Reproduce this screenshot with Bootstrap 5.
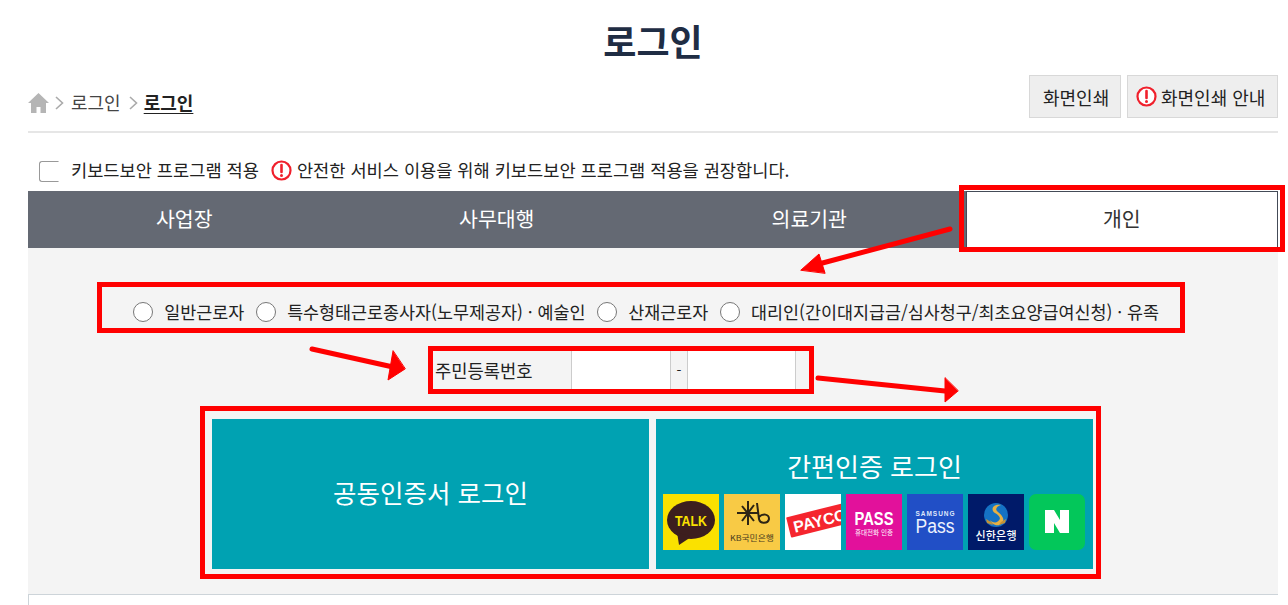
<!DOCTYPE html>
<html lang="ko">
<head>
<meta charset="utf-8">
<title>로그인</title>
<link href="https://cdn.jsdelivr.net/npm/bootstrap@5.3.0/dist/css/bootstrap.min.css" rel="stylesheet">
<style>
html,body{height:605px;overflow:hidden;background:#fff}
body{font-family:"Noto Sans CJK KR","Noto Sans",sans-serif;color:#222;font-size:17.6px;position:relative}
.page-wrap{padding:0 10px 0 28px}
.page-title{font-size:36px;font-weight:700;color:#1f2d44;text-align:center;line-height:52px;margin:0;padding:14px 0 9px;height:75px}
.crumb-row{height:58px;border-bottom:2px solid #e6e6e6}
.crumb-trail{font-size:18px;color:#444;padding-top:14px}
.crumb-trail b{color:#222;text-decoration:underline;text-underline-offset:3px;font-weight:700;margin-left:-1px}
.chev{width:9px;height:14px;margin:0 7px 0 6px}
.tool-btn{background:#eee;border:1px solid #d8d8d8;border-radius:0;height:43px;font-size:18px;color:#222;padding:0 13px;line-height:1;width:92px;white-space:nowrap}
.tool-btn.wide{padding:0 0 0 8px;width:151px}
.gap-six{gap:6px}
.alert-ic{width:21px;height:21px;flex:none}
.kb-row{height:58px;padding:25px 0 0 11px;font-size:17.6px;line-height:24px}
.form-check-input.kb-check[type=checkbox]{width:20px;height:21px;border:1px solid #999;border-right-color:transparent;border-radius:3px 0 0 3px;margin:3px 12px 0 0;background:#fff;flex:none}
.kb-note{margin-left:12px;gap:5px}
.tab-bar{background:#646973;height:57px}
.tab-item{flex:1 1 25%;color:#fff;font-size:20.5px;display:flex;align-items:center;justify-content:center;text-decoration:none;padding-bottom:2px}
.tab-item.on{background:#fff;color:#333;border:1px solid #444b57;font-weight:400}
.tab-panel{background:#f4f4f4;height:346px;border:0}
.radio-line{height:103px;padding:25px 0 0;font-size:17.4px;gap:11.4px;justify-content:center;margin-left:-14px}
.radio-line label{margin:0;white-space:nowrap}
.radio-line .form-check-input{width:20px;height:20px;margin:0;background:#fff;border:1px solid #777;flex:none}
.jumin-line{margin-left:405px;width:375px;height:38px;font-size:17.7px}
.jumin-line span.lbl{width:138px;padding-left:2px;white-space:nowrap}
.jumin-field{height:38px;border:0;border-left:1px solid #ccc;border-right:1px solid #ccc;background:#fff;border-radius:0;padding:0}
.f1{width:100px}
.f2{width:109px}
.dash{width:16px;text-align:center;font-size:14px}
.login-tiles{padding:30px 0 0 184px;gap:7px}
.login-tile{width:437px;height:150px;background:#00a2b2;color:#fff;border:0;border-radius:0;padding:0}
.tile-a{font-size:25.5px;padding-bottom:3px}
.tile-b{font-size:26px;line-height:38px;padding-top:28px}
.tile-b .logos{gap:5px;margin-top:9px;margin-right:1px}
.logo-ic{width:56px;height:56px;display:block}
.lower-card{height:40px;border:1px solid #cdd4d9;border-bottom:0;border-right:0;border-radius:0;background:#fff}
.mark-box{position:absolute;border:5px solid #f00;pointer-events:none}
.m1{left:959px;top:185px;width:326px;height:67px}
.m2{left:97px;top:282px;width:1088px;height:51px}
.m3{left:428px;top:346px;width:386px;height:48px}
.m4{left:200px;top:406px;width:901px;height:173px}
.arrow-layer{position:absolute;left:0;top:0;width:1288px;height:605px;pointer-events:none}
</style>
</head>
<body>
<div class="page-wrap">
  <h1 class="page-title">로그인</h1>
  <div class="crumb-row d-flex justify-content-between align-items-start">
    <div class="crumb-trail d-flex align-items-center">
      <svg width="21" height="20" viewBox="0 0 21 20"><path fill="#b5b5b5" d="M10.5 0 0 10h3v10h5.5v-6h4v6H18V10h3z"/></svg>
      <svg class="chev" viewBox="0 0 9 14"><path d="M1 1l6.5 6L1 13" fill="none" stroke="#aaa" stroke-width="1.6"/></svg>
      <span>로그인</span>
      <svg class="chev ms-2" viewBox="0 0 9 14"><path d="M1 1l6.5 6L1 13" fill="none" stroke="#aaa" stroke-width="1.6"/></svg>
      <b>로그인</b>
    </div>
    <div class="d-flex gap-six">
      <button type="button" class="btn tool-btn">화면인쇄</button>
      <button type="button" class="btn tool-btn wide d-flex align-items-center gap-1">
        <svg class="alert-ic" viewBox="0 0 21 21"><circle cx="10.5" cy="10.5" r="9" fill="#fff" stroke="#f0202c" stroke-width="2.2"/><path d="M10.5 5v7" stroke="#f0202c" stroke-width="2.6" stroke-linecap="round"/><circle cx="10.5" cy="15.5" r="1.5" fill="#f0202c"/></svg>
        화면인쇄 안내</button>
    </div>
  </div>
  <div class="kb-row d-flex align-items-start">
    <input type="checkbox" class="form-check-input kb-check" aria-label="키보드보안 프로그램 적용">
    <span>키보드보안 프로그램 적용</span>
    <span class="kb-note d-flex align-items-center">
      <svg class="alert-ic" viewBox="0 0 21 21"><circle cx="10.5" cy="10.5" r="9" fill="#fff" stroke="#f0202c" stroke-width="2.2"/><path d="M10.5 5v7" stroke="#f0202c" stroke-width="2.6" stroke-linecap="round"/><circle cx="10.5" cy="15.5" r="1.5" fill="#f0202c"/></svg>
      안전한 서비스 이용을 위해 키보드보안 프로그램 적용을 권장합니다.</span>
  </div>
  <div class="tab-bar d-flex">
    <a class="tab-item" href="#">사업장</a>
    <a class="tab-item" href="#">사무대행</a>
    <a class="tab-item" href="#">의료기관</a>
    <a class="tab-item on" href="#">개인</a>
  </div>
  <div class="tab-panel">
    <div class="radio-line d-flex align-items-center">
      <input class="form-check-input" type="radio" name="who" id="r1"><label for="r1">일반근로자</label>
      <input class="form-check-input" type="radio" name="who" id="r2"><label for="r2">특수형태근로종사자(노무제공자) · 예술인</label>
      <input class="form-check-input" type="radio" name="who" id="r3"><label for="r3">산재근로자</label>
      <input class="form-check-input" type="radio" name="who" id="r4"><label for="r4">대리인(간이대지급금/심사청구/최초요양급여신청) · 유족</label>
    </div>
    <div class="jumin-line d-flex align-items-center">
      <span class="lbl">주민등록번호</span>
      <input class="form-control jumin-field f1" type="text" aria-label="주민등록번호 앞자리">
      <span class="dash">-</span>
      <input class="form-control jumin-field f2" type="password" aria-label="주민등록번호 뒷자리">
    </div>
    <div class="login-tiles d-flex">
      <button type="button" class="btn login-tile tile-a">공동인증서 로그인</button>
      <button type="button" class="btn login-tile tile-b d-flex flex-column align-items-center">
        <span>간편인증 로그인</span>
        <span class="logos d-flex">
          <svg class="logo-ic" viewBox="0 0 56 56"><rect width="56" height="56" fill="#fae100"/><ellipse cx="28" cy="26" rx="24" ry="19" fill="#3c1e1e"/><path d="M14 38l2 13 12-8z" fill="#3c1e1e"/><text x="28" y="32" text-anchor="middle" font-family="Liberation Sans,sans-serif" font-weight="700" font-size="15" textLength="32" lengthAdjust="spacingAndGlyphs" fill="#fae100">TALK</text></svg>
          <svg class="logo-ic" viewBox="0 0 56 56"><rect width="56" height="56" fill="#f8ca45"/><path d="M13 19h22M18 12l12 15M30 11 18 27M24 7v24M33 9l2 16c1 5 9 5 10 0 0-5-6-6-10-2" fill="none" stroke="#2d2414" stroke-width="2"/><text x="28" y="47" text-anchor="middle" font-family="Noto Sans CJK KR,sans-serif" font-size="8" textLength="44" lengthAdjust="spacingAndGlyphs" fill="#4a3c20">KB국민은행</text></svg>
          <svg class="logo-ic" viewBox="0 0 56 56"><rect width="56" height="56" fill="#fff"/><g transform="rotate(-14 28 28)"><rect x="3" y="17" width="70" height="21" rx="1" fill="#f5252e"/><text x="8" y="34" font-family="Liberation Sans,sans-serif" font-weight="700" font-size="16" fill="#fff">PAYCO</text></g></svg>
          <svg class="logo-ic" viewBox="0 0 56 56"><rect width="56" height="56" fill="#e2119b"/><text x="28" y="31" text-anchor="middle" font-family="Liberation Sans,sans-serif" font-weight="700" font-size="18" textLength="39" lengthAdjust="spacingAndGlyphs" fill="#fff">PASS</text><text x="28" y="41" text-anchor="middle" font-family="Noto Sans CJK KR,sans-serif" font-size="7" textLength="38" lengthAdjust="spacingAndGlyphs" fill="#fff">휴대전화 인증</text></svg>
          <svg class="logo-ic" viewBox="0 0 56 56"><rect width="56" height="56" fill="#214fc6"/><text x="28" y="22" text-anchor="middle" font-family="Liberation Sans,sans-serif" font-weight="700" font-size="6.5" textLength="39" fill="#dfe6fa">SAMSUNG</text><text x="28" y="39" text-anchor="middle" font-family="Liberation Sans,sans-serif" font-size="20" textLength="39" lengthAdjust="spacingAndGlyphs" fill="#eef2fd">Pass</text></svg>
          <svg class="logo-ic" viewBox="0 0 56 56"><rect width="56" height="56" fill="#001a69"/><circle cx="28" cy="21" r="12" fill="#1572c4"/><path d="M33 11c-8-2-11 5-6 8s7 6 2 9c-2 1-6 0-7-2 1 4 8 8 12 3 4-5-2-9-5-12-2-2 0-5 4-6z" fill="#e8b042"/><path d="M18 25l5 3 2 3-6-2zM38 25l-5 3-2 3 6-2z" fill="#c49135"/><text x="28" y="46" text-anchor="middle" font-family="Noto Sans CJK KR,sans-serif" font-weight="500" font-size="11" textLength="41" fill="#fff">신한은행</text></svg>
          <svg class="logo-ic" viewBox="0 0 56 56"><rect width="56" height="56" rx="7" fill="#03c75a"/><path d="M16 16h9l6 10V16h9v23h-9l-6-10v10h-9z" fill="#fff"/></svg>
        </span>
      </button>
    </div>
  </div>
  <div class="card lower-card"></div>
</div>
<div class="mark-box m1"></div>
<div class="mark-box m2"></div>
<div class="mark-box m3"></div>
<div class="mark-box m4"></div>
<svg class="arrow-layer" viewBox="0 0 1288 605" aria-hidden="true">
  <g stroke="#f00" stroke-width="5" stroke-linecap="round" fill="#f00">
    <path d="M950 229 815 265" fill="none"/><path d="M801 270 819 254 825 273z" stroke-width="1"/>
    <path d="M312 349 393 367" fill="none"/><path d="M405 369 388 380 393 351z" stroke-width="1"/>
    <path d="M818 378 945 391" fill="none"/><path d="M958 391 945 402 945 378z" stroke-width="1"/>
  </g>
</svg>
<script src="https://cdn.jsdelivr.net/npm/bootstrap@5.3.0/dist/js/bootstrap.bundle.min.js"></script>
</body>
</html>
